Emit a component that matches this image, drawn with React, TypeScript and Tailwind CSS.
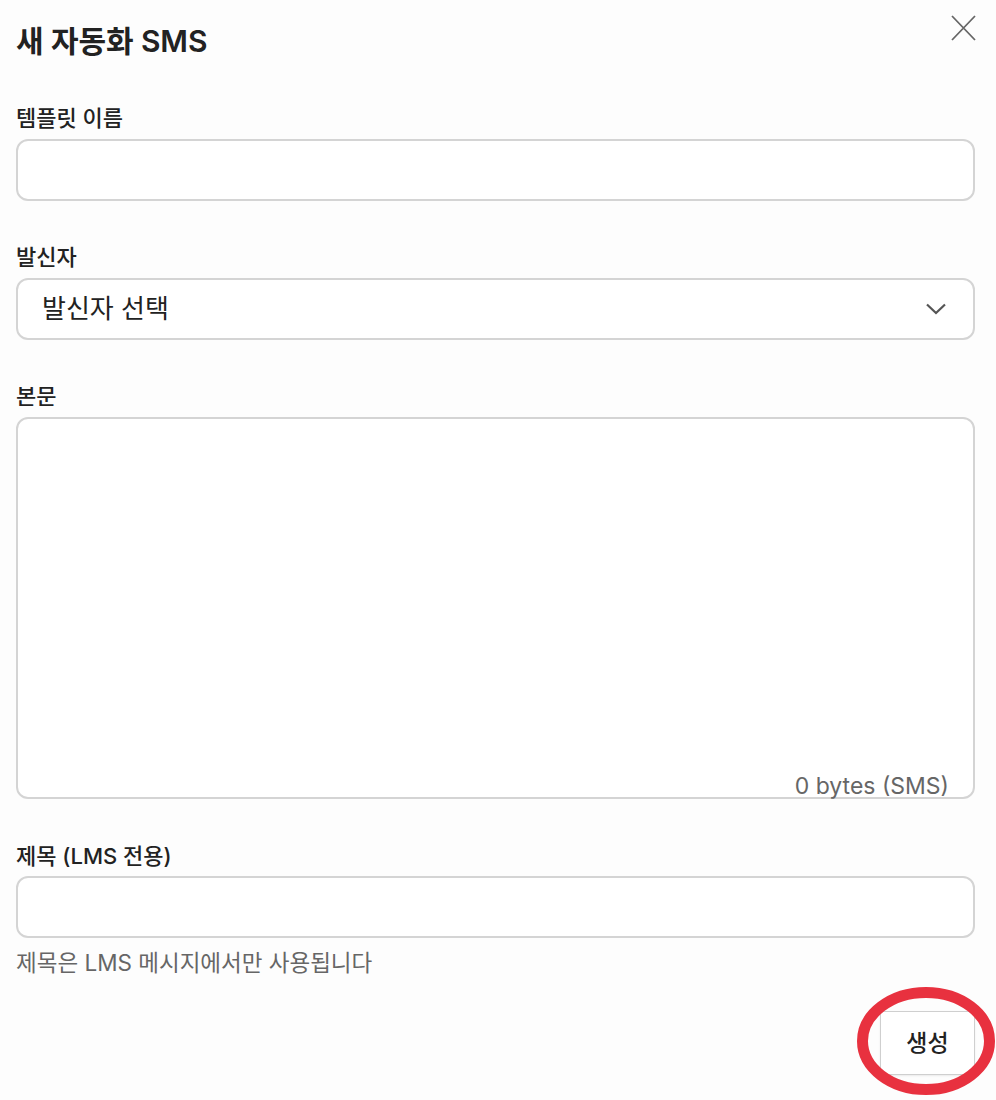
const FONT = 'font-["Inter","Noto_Sans_CJK_KR",sans-serif]';

function Label({ children }: { children: React.ReactNode }) {
  return (
    <label className="block text-[22px] leading-[28px] font-medium text-[#222]">
      {children}
    </label>
  );
}

export default function App() {
  return (
    <div className={`${FONT} bg-[#fdfdfd] min-h-[1100px] w-[996px] pl-4 pr-[21px] text-[#222]`}>
      {/* Header */}
      <div className="flex items-start justify-between pt-[15px]">
        <h2 className="mt-[9px] text-[30px] leading-[34px] font-semibold tracking-[-0.1px]">새 자동화 SMS</h2>
        <button aria-label="닫기" className="text-[#666] -mr-[1px]">
          <svg width="25" height="26" viewBox="0 0 25 26" fill="none" stroke="currentColor" strokeWidth="1.8">
            <path d="M1 1L24 25M24 1L1 25" />
          </svg>
        </button>
      </div>

      {/* 템플릿 이름 */}
      <div className="mt-[46px]">
        <Label>템플릿 이름</Label>
        <input
          type="text"
          className="mt-[7px] block w-full h-[62px] rounded-xl border-2 border-[#d4d4d4] bg-white px-6 text-[22px] outline-none"
        />
      </div>

      {/* 발신자 */}
      <div className="mt-[42px]">
        <Label>발신자</Label>
        <div className="mt-[7px] flex h-[62px] items-center justify-between rounded-xl border-2 border-[#d4d4d4] bg-white pl-6 pr-[27px]">
          <span className="text-[26px] leading-none text-[#222]">발신자 선택</span>
          <svg width="20" height="12" viewBox="0 0 20 12" fill="none" stroke="#555" strokeWidth="2.2">
            <path d="M1 1.5L10 10L19 1.5" />
          </svg>
        </div>
      </div>

      {/* 본문 */}
      <div className="mt-[42px]">
        <Label>본문</Label>
        <div className="relative mt-[7px] h-[382px] rounded-xl border-2 border-[#d4d4d4] bg-white">
          <textarea className="h-full w-full resize-none bg-transparent p-6 text-[22px] outline-none" />
          <span className="absolute -bottom-[4px] right-[24px] text-[23px] leading-[30px] text-[#666]">
            0 bytes (SMS)
          </span>
        </div>
      </div>

      {/* 제목 */}
      <div className="mt-[43px]">
        <Label>제목 (LMS 전용)</Label>
        <input
          type="text"
          className="mt-[6px] block w-full h-[62px] rounded-xl border-2 border-[#d4d4d4] bg-white px-6 text-[22px] outline-none"
        />
        <p className="mt-[11px] text-[22.5px] leading-[28px] text-[#666]">
          제목은 LMS 메시지에서만 사용됩니다
        </p>
      </div>

      {/* Footer */}
      <div className="mt-[34px] flex justify-end">
        <div className="relative">
          <button className="h-[64px] w-[95px] rounded-[3px] border border-[#cfcfcf] bg-white text-[23px] font-medium text-[#222] shadow-[0_1px_2px_rgba(0,0,0,0.08)]">
            생성
          </button>
          {/* annotation ring */}
          <svg
            className="pointer-events-none absolute right-[-20px] top-[-24px]"
            width="138"
            height="108"
            viewBox="0 0 138 108"
          >
            <ellipse cx="69" cy="54" rx="63.5" ry="48.5" fill="none" stroke="#e8313f" strokeWidth="11" />
          </svg>
        </div>
      </div>
    </div>
  );
}
